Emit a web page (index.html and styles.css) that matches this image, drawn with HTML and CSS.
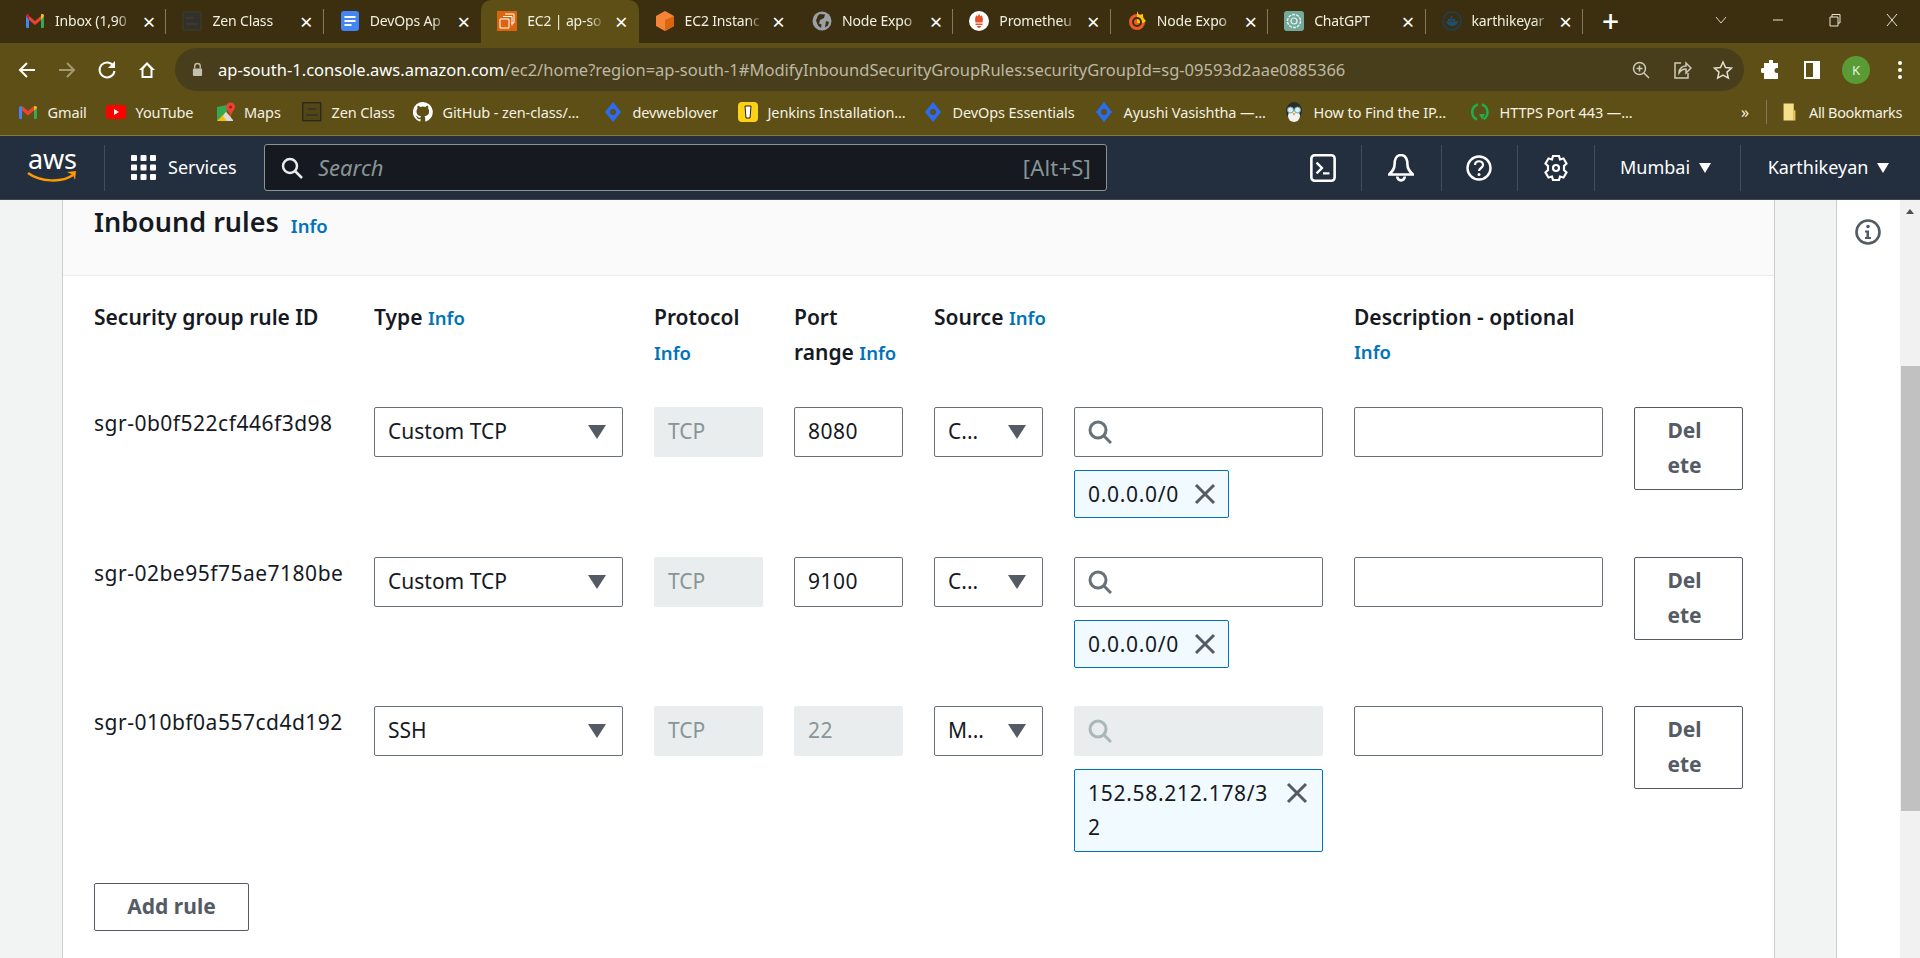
FILE: index.html
```html
<!DOCTYPE html>
<html lang="en">
<head>
<meta charset="utf-8">
<title>EC2 | ap-south-1</title>
<link rel="stylesheet" href="styles.css">
</head>
<body>
<div class="tabstrip">
  <div class="tab sep"><svg class="fav" viewBox="0 0 20 20"><path fill="#4285f4" d="M1 5h3v12H2a1 1 0 0 1-1-1z"/><path fill="#34a853" d="M16 5h3v11a1 1 0 0 1-1 1h-2z"/><path fill="#ea4335" d="M4 5l6 5 6-5v4l-6 5-6-5z"/><path fill="#c5221f" d="M1 5c0-2 2-2.500 3-1.500L4 9z"/><path fill="#fbbc04" d="M16 3.500c1-1 3-.5 3 1.500L16 9z"/></svg><span class="tab-title">Inbox (1,90</span><span class="tab-x">×</span></div>
  <div class="tab sep"><svg class="fav" viewBox="0 0 20 20"><rect x="1" y="1" width="18" height="18" fill="#33302a" stroke="#3f3d30"/><path stroke="#45453a" d="M4 7h8M4 13h12"/></svg><span class="tab-title">Zen Class</span><span class="tab-x">×</span></div>
  <div class="tab"><svg class="fav" viewBox="0 0 20 20"><rect x="1" y="0" width="18" height="20" rx="3" fill="#4285f4"/><path stroke="#fff" stroke-width="2" d="M4.500 6h11M4.500 10h11M4.500 14h7"/></svg><span class="tab-title">DevOps Ap</span><span class="tab-x">×</span></div>
  <div class="tab active"><svg class="fav" viewBox="0 0 20 20"><rect width="20" height="20" fill="#d9660f"/><path fill="none" stroke="#fff" d="M8 3h9v9h-3M3 8h9v9H3zM6 5.500h9v9"/></svg><span class="tab-title">EC2 | ap-so</span><span class="tab-x">×</span></div>
  <div class="tab"><svg class="fav" viewBox="0 0 20 20"><path fill="#f58536" d="M10 0l9 5v10l-9 5-9-5V5z"/><path fill="#d9660f" d="M10 9l9-4v10l-9 5z"/></svg><span class="tab-title">EC2 Instanc</span><span class="tab-x">×</span></div>
  <div class="tab sep"><svg class="fav" viewBox="0 0 20 20"><circle cx="10" cy="10" r="9.500" fill="#9aa0a6"/><path fill="#3c2f10" d="M8 3l5 .5-1 3.500-4 2-1 3.500 2.500 1-.5 3.500-3-2.500-2-5 2-5zM14 10l3 1-1 3.500-3 2z"/></svg><span class="tab-title">Node Expo</span><span class="tab-x">×</span></div>
  <div class="tab sep"><svg class="fav" viewBox="0 0 20 20"><circle cx="10" cy="10" r="10" fill="#fff"/><path fill="#e6522c" d="M10 2.500c.5 2 1 1.500 1.500 3 .5-.5.800-1 .8-1.500 1.700 2 2 4.500 1.200 7.500H6.500c-.8-3-.5-5.500 1.200-7.500 0 .5.300 1 .8 1.500.5-1.500 1-1 1.500-3zM6.500 12.500h7V14h-7zM8 15h4a2 2 0 0 1-4 0z"/></svg><span class="tab-title">Prometheu</span><span class="tab-x">×</span></div>
  <div class="tab sep"><svg class="fav" viewBox="0 0 20 20"><circle cx="10" cy="11" r="8" fill="#f05a28"/><path fill="#fbca0a" d="M10 0l2 4 4-1v4l3 3-3 2H10z"/><circle cx="10" cy="11" r="4" fill="none" stroke="#3c2f10" stroke-width="2"/></svg><span class="tab-title">Node Expo</span><span class="tab-x">×</span></div>
  <div class="tab sep"><svg class="fav" viewBox="0 0 20 20"><rect width="20" height="20" rx="3" fill="#74aa9c"/><circle cx="10" cy="10" r="6.500" fill="none" stroke="#e8f2ef" stroke-width="1.400" stroke-dasharray="3 1"/><circle cx="10" cy="10" r="3" fill="none" stroke="#e8f2ef" stroke-width="1.200"/></svg><span class="tab-title">ChatGPT</span><span class="tab-x">×</span></div>
  <div class="tab sep"><svg class="fav" viewBox="0 0 20 20"><circle cx="10" cy="10" r="9" fill="none" stroke="#1d3f57" stroke-width="1.500"/><path fill="#1d4f72" d="M4 10.500h10c1 0 1.500-1 2.500-1-.5 3.500-3 5.500-6.500 5.500-3 0-5-1.800-6-4.500z"/><path fill="#1d4f72" d="M6 8h2v2H6zM8.500 8h2v2h-2zM11 8h2v2h-2zM8.500 5.500h2v2h-2z"/></svg><span class="tab-title">karthikeyar</span><span class="tab-x">×</span></div>
  <div class="newtab">+</div>
  <div class="win-controls">
    <svg class="win-ico" viewBox="0 0 14 14"><path d="M2 4l5 6 5-6" fill="none" stroke="#d8d4c4"/></svg>
    <svg class="win-ico" viewBox="0 0 14 14"><path d="M2 7h10" stroke="#e8e4d4"/></svg>
    <svg class="win-ico" viewBox="0 0 14 14"><path d="M2 4h8v9H2zM4 4V1.500h8V10h-2" fill="none" stroke="#e8e4d4"/></svg>
    <svg class="win-ico" viewBox="0 0 14 14"><path d="M2 1l10 12M12 1L2 13" stroke="#e8e4d4"/></svg>
  </div>
</div>

<div class="toolbar">
  <div class="nav-buttons">
    <svg class="tb-ico" viewBox="0 0 20 20"><path d="M18 10H3M10 3l-7 7 7 7" fill="none" stroke="#fff" stroke-width="2"/></svg>
    <svg class="tb-ico" viewBox="0 0 20 20"><path d="M2 10h15M10 3l7 7-7 7" fill="none" stroke="#a39a72" stroke-width="2"/></svg>
    <svg class="tb-ico" viewBox="0 0 20 20"><path d="M16.500 6A7.500 7.500 0 1 0 17.500 11" fill="none" stroke="#fff" stroke-width="2"/><path fill="#fff" d="M18 1v7h-7z"/></svg>
    <svg class="tb-ico" viewBox="0 0 20 20"><path d="M10 2L2 10h2.500v8h11v-8H18zM6.500 16v-7L10 5l3.500 4v7z" fill="#fff"/></svg>
  </div>
  <div class="omnibox">
    <svg class="lock" viewBox="0 0 12 16"><path fill="none" stroke="#c4c0b0" stroke-width="1.500" d="M3 7V4.500a3 3 0 0 1 6 0V7"/><rect x="1" y="7" width="10" height="8" rx="1" fill="#c4c0b0"/></svg>
    <span class="url"><span class="url-host">ap-south-1.console.aws.amazon.com</span>/ec2/home?region=ap-south-1#ModifyInboundSecurityGroupRules:securityGroupId=sg-09593d2aae0885366</span>
    <div class="omni-actions">
      <svg class="omni-ico" viewBox="0 0 20 20"><circle cx="8.500" cy="8.500" r="6" fill="none" stroke="#cfcbb8" stroke-width="1.500"/><path d="M13 13l5 5M5.500 8.500h6M8.500 5.500v6" stroke="#cfcbb8" stroke-width="1.500"/></svg>
      <svg class="omni-ico" viewBox="0 0 20 20"><path d="M9 3H3v15h13v-5M7 13c0-5 4-7 7-7V3l5 5-5 5V9c-3 0-5 1-7 4z" fill="none" stroke="#cfcbb8" stroke-width="1.500"/></svg>
      <svg class="omni-ico" viewBox="0 0 20 20"><path d="M10 2l2.500 5.500 6 .6-4.500 4 1.300 6L10 15l-5.300 3.100 1.300-6-4.500-4 6-.6z" fill="none" stroke="#e4e0d0" stroke-width="1.500"/></svg>
    </div>
  </div>
  <div class="tb-right">
    <svg class="tb-ico" viewBox="0 0 20 20"><path fill="#fff" d="M8 1a2 2 0 0 1 4 0v2h5v5h-1a2 2 0 0 0 0 5h1v6H3v-6H2a2.500 2.500 0 0 1 0-5h1V3h5z"/></svg>
    <svg class="tb-ico" viewBox="0 0 20 20"><path fill="none" stroke="#fff" stroke-width="2" d="M3 2h14v16H3z"/><rect x="11" y="2" width="6" height="16" fill="#fff"/></svg>
    <div class="avatar">K</div>
    <svg class="tb-ico" viewBox="0 0 20 20"><circle cx="10" cy="3" r="2" fill="#fff"/><circle cx="10" cy="10" r="2" fill="#fff"/><circle cx="10" cy="17" r="2" fill="#fff"/></svg>
  </div>
</div>

<div class="bookmarks">
  <div class="bm"><svg class="fav" viewBox="0 0 20 20"><path fill="#4285f4" d="M1 6c0-1.500 1-2 3-1.500V17H2a1 1 0 0 1-1-1z"/><path fill="#34a853" d="M16 4.500c2-.5 3 0 3 1.500v10a1 1 0 0 1-1 1h-2z"/><path fill="#ea4335" d="M4 4l6 5 6-5v4.500l-6 5-6-5z"/><path fill="#fbbc04" d="M16 4.500c1-1.200 3-.5 3 1.500l-3 2.500z"/></svg><span>Gmail</span></div>
  <div class="bm"><svg class="fav" viewBox="0 0 20 20"><rect y="3" width="20" height="14" rx="3" fill="#f00"/><path fill="#fff" d="M8 7l5 3-5 3z"/></svg><span>YouTube</span></div>
  <div class="bm bm-maps"><svg class="fav" viewBox="0 0 20 20"><path fill="#34a853" d="M1 5l10-2v16H1z"/><path fill="#fbbc04" d="M1 19l9-9 5 5v4z"/><path fill="#d8dce0" d="M7 14l3-4 7 8v1h-6z"/><circle cx="14.500" cy="5" r="4.500" fill="#ea4335"/><path fill="#ea4335" d="M11 7l3.500 7L18 7z"/><circle cx="14.500" cy="5" r="1.500" fill="#a51c13"/></svg><span>Maps</span></div>
  <div class="bm"><svg class="fav" viewBox="0 0 20 20"><rect x=".7" y=".7" width="18" height="18" fill="#51451a" stroke="#2c2a1c" stroke-width="1.400"/><path stroke="#2c2a1c" d="M6 7h8M4 13h12"/></svg><span>Zen Class</span></div>
  <div class="bm"><svg class="fav" viewBox="0 0 20 20"><path fill="#fff" d="M10 0a10 10 0 0 0-3.200 19.500c.5.100.7-.2.700-.5v-1.900c-2.800.6-3.400-1.300-3.400-1.300-.5-1.100-1.100-1.500-1.100-1.500-.9-.6.100-.6.100-.6 1 .1 1.500 1 1.500 1 .9 1.500 2.300 1.100 2.900.8.100-.6.300-1.100.6-1.300-2.200-.3-4.600-1.100-4.600-4.900 0-1.100.4-2 1-2.700-.1-.3-.4-1.300.1-2.700 0 0 .8-.3 2.700 1a9.500 9.500 0 0 1 5 0c1.900-1.300 2.700-1 2.700-1 .5 1.400.2 2.400.1 2.700.6.700 1 1.600 1 2.700 0 3.800-2.300 4.600-4.600 4.900.4.300.7.900.7 1.900V19c0 .3.200.6.700.5A10 10 0 0 0 10 0z"/></svg><span>GitHub - zen-class/...</span></div>
  <div class="bm"><svg class="fav" viewBox="0 0 20 20"><path fill="#2a6df4" d="M10 0l8 10-8 10-8-10z"/><circle cx="10" cy="10" r="3" fill="#5e4f16"/></svg><span>devweblover</span></div>
  <div class="bm"><svg class="fav" viewBox="0 0 20 20"><rect width="20" height="20" rx="4" fill="#fcd116"/><path fill="#fff" stroke="#222" d="M7 4h6l-1 12H8z"/></svg><span>Jenkins Installation...</span></div>
  <div class="bm"><svg class="fav" viewBox="0 0 20 20"><path fill="#2a6df4" d="M10 0l8 10-8 10-8-10z"/><circle cx="10" cy="10" r="3" fill="#5e4f16"/></svg><span>DevOps Essentials</span></div>
  <div class="bm"><svg class="fav" viewBox="0 0 20 20"><path fill="#2a6df4" d="M10 0l8 10-8 10-8-10z"/><circle cx="10" cy="10" r="3" fill="#5e4f16"/></svg><span>Ayushi Vasishtha —...</span></div>
  <div class="bm"><svg class="fav" viewBox="0 0 20 20"><ellipse cx="10" cy="9" rx="8" ry="9" fill="#2b2b2b"/><ellipse cx="10" cy="14" rx="6" ry="6" fill="#f2f2f2"/><circle cx="6.500" cy="8" r="3" fill="#dfeeee" stroke="#5fa6a6"/><circle cx="13.500" cy="8" r="3" fill="#dfeeee" stroke="#5fa6a6"/><path fill="#f59a23" d="M8.500 11h3L10 14z"/></svg><span>How to Find the IP...</span></div>
  <div class="bm"><svg class="fav" viewBox="0 0 20 20"><path d="M12 2.500a8 8 0 0 1 1.500 14.500M7 17.500A8 8 0 0 1 8 2.500" fill="none" stroke="#1fae4e" stroke-width="2.500"/><path fill="#1fae4e" d="M9 12l3 5.500 3-5.500z"/></svg><span>HTTPS Port 443 —...</span></div>
  <div class="bm-end">
    <span class="bm-more">»</span>
    <span class="bm-sep"></span>
    <svg class="fav" viewBox="0 0 20 20"><path fill="#f7e08a" d="M3 0h12v20H3z"/><path fill="#e6c65a" d="M15 8h2v12h-2z"/></svg>
    <span class="bm-all">All Bookmarks</span>
  </div>
</div>

<header class="aws">
  <div class="aws-logo">
    <span class="aws-word">aws</span>
    <svg class="aws-smile" viewBox="0 0 50 12"><path d="M1 2c12 9 34 10 45 2" fill="none" stroke="#ff9900" stroke-width="2.500"/><path fill="#ff9900" d="M40 1l9-1-1 9-2-5z"/></svg>
  </div>
  <div class="aws-services">
    <svg class="grid-ico" viewBox="0 0 25 25"><g fill="#fff"><rect width="6" height="6" rx="1"/><rect x="9.500" width="6" height="6" rx="1"/><rect x="19" width="6" height="6" rx="1"/><rect y="9.500" width="6" height="6" rx="1"/><rect x="9.500" y="9.500" width="6" height="6" rx="1"/><rect x="19" y="9.500" width="6" height="6" rx="1"/><rect y="19" width="6" height="6" rx="1"/><rect x="9.500" y="19" width="6" height="6" rx="1"/><rect x="19" y="19" width="6" height="6" rx="1"/></g></svg>
    <span class="aws-text">Services</span>
  </div>
  <div class="aws-search">
    <svg class="search-ico" viewBox="0 0 22 22"><circle cx="9" cy="9" r="7" fill="none" stroke="#eaeded" stroke-width="2.500"/><path d="M14 14l7 7" stroke="#eaeded" stroke-width="2.500"/></svg>
    <span class="aws-search-text aws-text">Search</span>
    <span class="aws-search-key aws-text">[Alt+S]</span>
  </div>
  <div class="aws-right">
    <div class="aws-cell c-term"><svg class="aws-ico" viewBox="0 0 24 26"><rect x="1.200" y="1.200" width="21.600" height="23.600" rx="3" fill="none" stroke="#fff" stroke-width="2.400"/><path d="M6 8l5 5-5 5M12 18h6" fill="none" stroke="#fff" stroke-width="2.200"/></svg></div>
    <div class="aws-cell c-bell"><svg class="aws-ico" viewBox="1 1 24 26"><path d="M13 2c-5 0-6 5-6 9 0 4-2 6-5 9h22c-3-3-5-5-5-9 0-4-1-9-6-9zM9.500 22a3.500 3.500 0 0 0 7 0" fill="none" stroke="#fff" stroke-width="2.400"/></svg></div>
    <div class="aws-cell c-help"><svg class="aws-ico" viewBox="0 0 26 26"><circle cx="13" cy="13" r="11.500" fill="none" stroke="#fff" stroke-width="2.400"/><path d="M9 10c0-5 8-5 8 0 0 3-4 3-4 6" fill="none" stroke="#fff" stroke-width="2.200"/><circle cx="13" cy="19.500" r="1.500" fill="#fff"/></svg></div>
    <div class="aws-cell c-gear"><svg class="aws-ico" viewBox="0 0 26 28"><path d="M10 2h6l1 3.500 3.500-1 3 5-2.500 2.500v4l2.500 2.500-3 5-3.500-1-1 3.500h-6l-1-3.500-3.500 1-3-5L5 16v-4L2.500 9.500l3-5 3.500 1z" fill="none" stroke="#fff" stroke-width="2.200"/><circle cx="13" cy="14" r="3" fill="none" stroke="#fff" stroke-width="2.200"/></svg></div>
    <div class="aws-cell c-region"><span class="aws-text">Mumbai</span><span class="aws-caret"></span></div>
    <div class="aws-cell c-user"><span class="aws-text">Karthikeyan</span><span class="aws-caret"></span></div>
  </div>
</header>

<div class="viewport">
  <main class="content">
    <section class="card">
      <div class="card-head">
        <h2 class="card-title">Inbound rules</h2>
        <a class="info info-title">Info</a>
      </div>
      <div class="card-body">
        <div class="rules rules-head">
          <div class="th">Security group rule ID</div>
          <div class="th">Type <a class="info">Info</a></div>
          <div class="th">Protocol <a class="info">Info</a></div>
          <div class="th">Port<br>range <a class="info">Info</a></div>
          <div class="th th-source">Source <a class="info">Info</a></div>
          <div class="th"></div>
          <div class="th th-desc">Description - optional <a class="info">Info</a></div>
          <div class="th"></div>
        </div>

        <div class="rules rule r1">
          <div class="rule-id">sgr-0b0f522cf446f3d98</div>
          <div class="field select"><span>Custom TCP</span><span class="caret"></span></div>
          <div class="field disabled">TCP</div>
          <div class="field num">8080</div>
          <div class="field select"><span>C...</span><span class="caret"></span></div>
          <div class="source">
            <div class="field"><svg class="mag" viewBox="0 0 24 24"><circle cx="10" cy="10" r="8" fill="none" stroke="#687078" stroke-width="3"/><path d="M16 16l7 7" stroke="#687078" stroke-width="3"/></svg></div>
            <div class="tag"><span class="tag-text">0.0.0.0/0</span><svg class="tag-x" viewBox="0 0 22 22"><path d="M2 2l18 18M20 2L2 20" stroke="#545b64" stroke-width="3"/></svg></div>
          </div>
          <div class="field"></div>
          <div class="btn-delete">Delete</div>
        </div>

        <div class="rules rule r2">
          <div class="rule-id">sgr-02be95f75ae7180be</div>
          <div class="field select"><span>Custom TCP</span><span class="caret"></span></div>
          <div class="field disabled">TCP</div>
          <div class="field num">9100</div>
          <div class="field select"><span>C...</span><span class="caret"></span></div>
          <div class="source">
            <div class="field"><svg class="mag" viewBox="0 0 24 24"><circle cx="10" cy="10" r="8" fill="none" stroke="#687078" stroke-width="3"/><path d="M16 16l7 7" stroke="#687078" stroke-width="3"/></svg></div>
            <div class="tag"><span class="tag-text">0.0.0.0/0</span><svg class="tag-x" viewBox="0 0 22 22"><path d="M2 2l18 18M20 2L2 20" stroke="#545b64" stroke-width="3"/></svg></div>
          </div>
          <div class="field"></div>
          <div class="btn-delete">Delete</div>
        </div>

        <div class="rules rule r3">
          <div class="rule-id">sgr-010bf0a557cd4d192</div>
          <div class="field select"><span>SSH</span><span class="caret"></span></div>
          <div class="field disabled">TCP</div>
          <div class="field disabled num">22</div>
          <div class="field select"><span>M...</span><span class="caret"></span></div>
          <div class="source">
            <div class="field disabled"><svg class="mag" viewBox="0 0 24 24"><circle cx="10" cy="10" r="8" fill="none" stroke="#aab7b8" stroke-width="3"/><path d="M16 16l7 7" stroke="#aab7b8" stroke-width="3"/></svg></div>
            <div class="tag tag-wide"><span class="tag-text">152.58.212.178/32</span><svg class="tag-x" viewBox="0 0 22 22"><path d="M2 2l18 18M20 2L2 20" stroke="#545b64" stroke-width="3"/></svg></div>
          </div>
          <div class="field"></div>
          <div class="btn-delete">Delete</div>
        </div>

        <div class="btn-add">Add rule</div>
      </div>
    </section>
  </main>
  <aside class="side"><svg class="side-info" viewBox="0 0 26 26"><circle cx="13" cy="13" r="11.500" fill="none" stroke="#545b64" stroke-width="2.600"/><circle cx="13" cy="7.500" r="1.800" fill="#545b64"/><path d="M10 11.500h4V18h2v2h-6v-2h1.500v-4.500H10z" fill="#545b64"/></svg></aside>
  <div class="scrollbar"><span class="scroll-up"></span><span class="scroll-thumb"></span></div>
</div>
</body>
</html>
```

FILE: styles.css
```css
* { box-sizing: border-box; }
html, body { margin: 0; height: 958px; overflow: hidden; }
body { display: flex; flex-direction: column; font-family: "Noto Sans", "Open Sans", sans-serif; background: #f2f3f3; color: #16191f; }
svg { display: block; flex: none; }
a { text-decoration: none; }

/* Browser tab strip */
.tabstrip { height: 43px; flex: none; background: #3c2f10; display: flex; align-items: center; padding-left: 9px; color: #fff; font: 14px "Noto Sans", sans-serif; }
.tab { width: 157.4px; height: 43px; flex: none; display: flex; align-items: center; padding: 0 0 2px 16px; position: relative; border-radius: 10px 10px 0 0; }
.tab.sep::after { content: ""; position: absolute; right: 0; top: 9px; bottom: 9px; width: 1px; background: #85795a; }
.tab.active { background: #5e4f16; }
.fav { width: 20px; height: 20px; }
.tab-title { width: 78px; margin-left: 10px; white-space: nowrap; color: #f2efe2; letter-spacing: -.15px; -webkit-mask-image: linear-gradient(90deg, #000 80%, transparent 100%); mask-image: linear-gradient(90deg, #000 80%, transparent 100%); }
.tab-x { margin-left: 9px; width: 14px; text-align: center; font-size: 22px; line-height: 1; color: #fff; }
.newtab { margin-left: 19px; font-size: 30px; font-weight: 500; line-height: 1; padding-bottom: 2px; }
.win-controls { margin-left: auto; display: flex; gap: 43px; padding: 0 21px 4px 0; }
.win-ico { width: 14px; height: 14px; }

/* Browser toolbar */
.toolbar { height: 48px; flex: none; background: #5e4f16; display: flex; align-items: flex-end; padding: 0 0 0 17px; }
.nav-buttons { display: flex; gap: 20px; align-self: flex-end; height: 43px; align-items: center; }
.tb-ico { width: 20px; height: 20px; }
.omnibox { width: 1569px; height: 43px; margin-left: 18px; background: #483e1b; border-radius: 22px; display: flex; align-items: center; padding-left: 17px; font-size: 16.500px; color: #bdb8a3; }
.lock { width: 11px; height: 15px; }
.url { margin-left: 15px; white-space: nowrap; }
.url-host { color: #fff; }
.omni-actions { margin-left: auto; display: flex; gap: 21px; padding-right: 11px; }
.omni-ico { width: 20px; height: 20px; }
.tb-right { display: flex; align-items: center; height: 43px; margin-left: 17px; gap: 21px; }
.avatar { width: 28px; height: 28px; margin: 0 -1px; border-radius: 50%; background: #5b9b36; color: #e8f2e0; font-size: 13px; display: flex; align-items: center; justify-content: center; }

/* Bookmarks bar */
.bookmarks { height: 45px; flex: none; background: #5e4f16; border-bottom: 1px solid #857a3e; display: grid; grid-template-columns: 88px 110px 86px 111px 190px 135px 185px 171px 190px 186px 1fr; align-items: center; padding: 0 0 2px 18px; color: #f4f1e4; font-size: 14.500px; }
.bm { display: flex; align-items: center; gap: 9.500px; white-space: nowrap; letter-spacing: -.1px; }
.bm-maps { gap: 8px; }
.bm-end { position: absolute; left: 1741px; display: flex; align-items: center; white-space: nowrap; }
.bm-more { width: 25px; font-size: 16px; }
.bm-sep { width: 1px; height: 24px; background: #85795a; margin-right: 14px; }
.bm-end .fav { margin-right: 11px; width: 17px; }
.bm-all { letter-spacing: -.35px; }

/* AWS nav */
.aws { height: 64px; flex: none; background: #232f3e; border-bottom: 1px solid #414750; display: flex; align-items: center; color: #fff; font-size: 18px; }
.aws-text { margin-bottom: 2px; }
.aws-logo { width: 76px; margin-left: 28px; height: 33px; position: relative; }
.aws-word { position: absolute; left: 0; top: -7px; font-size: 27px; line-height: 30px; letter-spacing: -.2px; }
.aws-smile { position: absolute; left: -1px; top: 20px; width: 50px; height: 12px; }
.aws-services { display: flex; align-items: center; gap: 12px; height: 46px; border-left: 1px solid #414d5c; padding-left: 26px; width: 160px; }
.grid-ico { width: 25px; height: 25px; }
.aws-search { width: 843px; height: 47px; background: #16191f; border: 1px solid #879596; border-radius: 3px; display: flex; align-items: center; padding: 0 15px 0 16px; color: #879596; font-size: 22px; }
.search-ico { width: 22px; height: 22px; }
.aws-search-text { margin-left: 15px; font-style: italic; }
.aws-search-key { margin-left: auto; letter-spacing: .2px; }
.aws-right { display: flex; align-items: center; margin-left: auto; height: 100%; }
.aws-cell { height: 46px; display: flex; align-items: center; justify-content: center; gap: 9px; }
.aws-cell + .aws-cell { border-left: 1px solid #414d5c; }
.aws-ico { width: 26px; height: 28px; }
.c-term { width: 76px; }
.c-bell { width: 80px; padding-right: 2px; }
.c-help { width: 76px; padding-right: 2px; }
.c-gear { width: 77px; }
.c-region { width: 146px; padding-right: 4px; }
.c-user { width: 180px; padding-right: 4px; }
.aws-caret { width: 0; height: 0; border: 6px solid transparent; border-top: 10px solid #fff; border-bottom: 0; }

/* Page area */
.viewport { flex: 1; min-height: 0; display: flex; overflow: hidden; }
.content { flex: 1; padding-left: 62px; padding-right: 61px; }
.card { height: 100%; background: #fff; border-left: 1px solid #c9cfcf; border-right: 1px solid #c9cfcf; }
.card-head { height: 76px; background: #fafafa; border-bottom: 1px solid #eaeded; display: flex; align-items: flex-start; padding: 3px 0 0 31px; }
.card-title { margin: 0; font-size: 27px; line-height: 38px; font-weight: 600; }
.info { color: #0073bb; font-size: 18.500px; font-weight: 600; }
.info-title { margin: 10px 0 0 12px; line-height: 26px; }
.card-body { padding: 0 0 0 31px; }
.rules { display: grid; grid-template-columns: 249px 249px 109px 109px 109px 249px 249px 109px; column-gap: 31px; }
.rules-head { height: 131px; padding-top: 24px; }
.th { font-size: 21px; line-height: 34.500px; font-weight: 600; }
.th .info { font-size: 18.500px; }
.th-source { white-space: nowrap; }
.th-desc .info { display: block; }
.rule { font-size: 21px; line-height: 33px; }
.r1 { height: 150px; }
.r2 { height: 149px; }
.r3 { height: 177px; }
.rule-id { letter-spacing: .5px; white-space: nowrap; }
.field { height: 50px; border: 1px solid #687078; border-radius: 2px; background: #fff; display: flex; align-items: center; padding: 0 13px 2px; }
.num { letter-spacing: .5px; }
.select { justify-content: space-between; padding-right: 16px; }
.caret { width: 0; height: 0; border: 9px solid transparent; border-top: 14px solid #545b64; border-bottom: 0; margin-top: 2px; }
.disabled { background: #eaeded; border-color: #eaeded; color: #879596; }
.mag { width: 24px; height: 24px; margin-top: 2px; }
.source { display: flex; flex-direction: column; gap: 13px; align-items: flex-start; }
.source .field { width: 100%; }
.tag { width: 155px; min-height: 48px; line-height: 34px; background: #f1faff; border: 1px solid #0073bb; border-radius: 2px; padding: 6px 12px 6px 13px; display: flex; align-items: center; justify-content: space-between; letter-spacing: .7px; }
.tag-wide { width: 100%; align-items: flex-start; padding: 6px 14px 7px 13px; }
.tag-wide .tag-text { width: 184px; word-break: break-all; }
.tag-x { width: 22px; height: 22px; }
.tag-wide .tag-x { margin-top: 6px; }
.btn-delete { height: 83px; border: 1px solid #545b64; border-radius: 2px; background: #fff; color: #545b64; font-weight: 700; line-height: 35px; padding: 5px 36px 5px 28px; text-align: center; word-break: break-all; }
.btn-add { width: 155px; height: 48px; border: 1px solid #545b64; border-radius: 2px; color: #545b64; font-size: 21px; font-weight: 700; display: flex; align-items: center; justify-content: center; padding-bottom: 2px; }

/* Right panel and scrollbar */
.side { width: 64px; flex: none; background: #fff; border-left: 1px solid #c9cfcf; padding: 19px 0 0 18px; }
.side-info { width: 26px; height: 26px; }
.scrollbar { width: 20px; flex: none; background: #f1f1f1; padding-top: 166px; position: relative; }
.scroll-up { position: absolute; left: 6px; top: 9px; width: 0; height: 0; border: 4px solid transparent; border-bottom: 5px solid #505050; border-top: 0; }
.scroll-thumb { display: block; height: 445px; background: #c1c1c1; margin-left: 1px; }
```
